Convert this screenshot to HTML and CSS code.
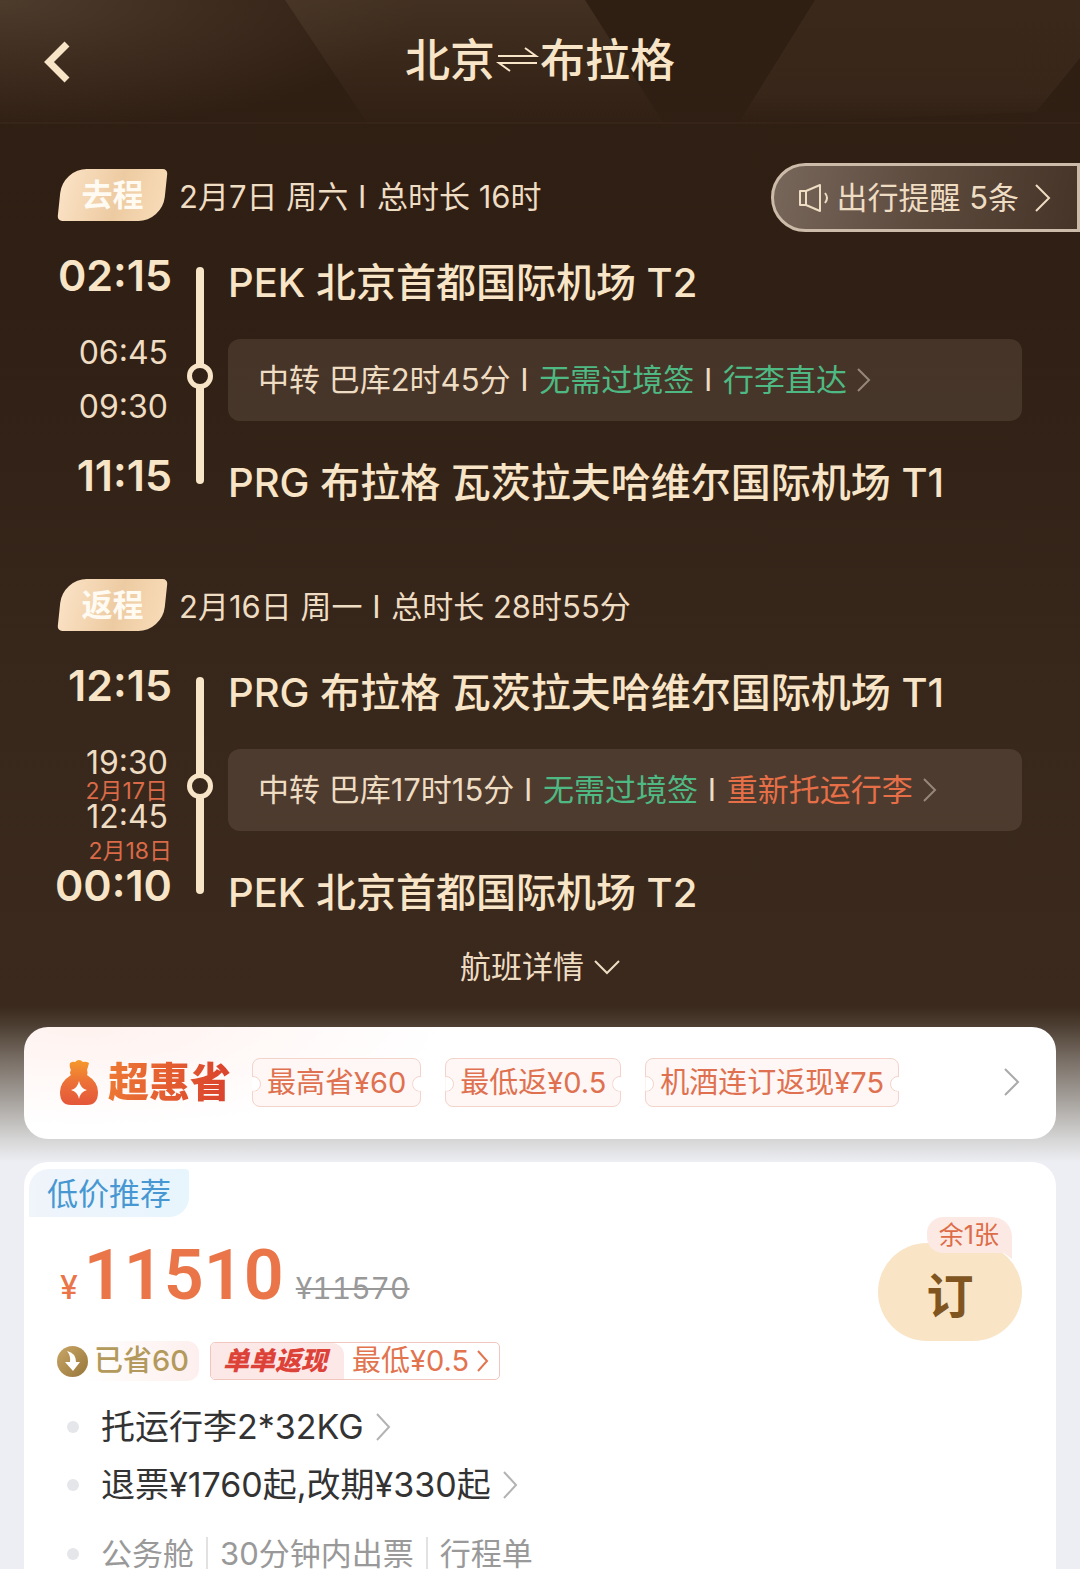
FILE: index.html
```html
<!DOCTYPE html>
<html lang="zh-CN">
<head>
<meta charset="utf-8">
<meta name="viewport" content="width=device-width, initial-scale=1">
<title>北京⇌布拉格</title>
<link rel="stylesheet" href="styles.css">
</head>
<body>
<div class="hero">
  <header class="topbar">
    <svg class="topbar-art" viewBox="0 0 1080 124" preserveAspectRatio="none" aria-hidden="true">
      <defs>
        <linearGradient id="facet" x1="0" y1="0" x2="0" y2="1">
          <stop offset="0" stop-color="#5a4634" stop-opacity=".45"/>
          <stop offset="1" stop-color="#5a4634" stop-opacity=".03"/>
        </linearGradient>
        <linearGradient id="facet2" x1="0" y1="0" x2="0" y2="1">
          <stop offset="0" stop-color="#5a4634" stop-opacity=".26"/>
          <stop offset=".75" stop-color="#5a4634" stop-opacity=".2"/>
          <stop offset="1" stop-color="#5a4634" stop-opacity="0"/>
        </linearGradient>
      </defs>
      <path d="M285 0H585L664 124H368Z" fill="url(#facet)"/>
      <path d="M815 0H1080V58L1036 112L738 124Z" fill="url(#facet2)"/>
      <path d="M0 123H1080" stroke="#4a3627" stroke-opacity=".5"/>
    </svg>
    <button class="back" type="button" aria-label="返回">
      <svg width="28" height="44" viewBox="0 0 28 44"><path d="M25 4L7 22L25 40" fill="none" stroke="currentColor" stroke-width="7"/></svg>
    </button>
    <h1 class="title">北京<svg width="45" height="34" viewBox="0 0 45 34" role="img" aria-label="往返"><path d="M3 12H41L30 4M42 19H4L15 27" fill="none" stroke="currentColor" stroke-width="2"/></svg>布拉格</h1>
  </header>

  <main class="trip">
    <section class="leg">
      <div class="leg-head">
        <span class="leg-tag">去程</span>
        <p class="leg-meta">2月7日 周六 <span class="sep">I</span> 总时长 16时</p>
        <button class="notice" type="button">
          <svg width="32" height="32" viewBox="0 0 32 32" fill="none" stroke="currentColor" stroke-width="2" stroke-linejoin="round"><path d="M2 9H8V23H2ZM8 9L22 3V29L8 23M27 11Q31 16 27 21"/></svg>
          <span>出行提醒 5条</span>
          <svg class="notice-arrow" width="16" height="28" viewBox="0 0 16 28"><path d="M1 1L14 14L1 27" fill="none" stroke="currentColor" stroke-width="2"/></svg>
        </button>
      </div>
      <div class="leg-body">
        <div class="times">
          <time class="time-main">02:15</time>
          <div class="via">
            <time>06:45</time><span class="date"></span>
            <time>09:30</time>
          </div>
          <span class="date date-last"></span>
          <time class="time-main">11:15</time>
        </div>
        <div class="track"><i class="bar"></i><i class="ring"></i><i class="bar"></i></div>
        <div class="stops">
          <h2 class="airport">PEK 北京首都国际机场 T2</h2>
          <a class="transfer" href="#transfer-out">
            <span>中转 巴库2时45分 <span class="sep">I</span> <b class="good">无需过境签</b> <span class="sep">I</span> <b class="good">行李直达</b></span>
            <svg width="14" height="24" viewBox="0 0 14 24"><path d="M1 1L12 12L1 23" fill="none" stroke="currentColor" stroke-width="2"/></svg>
          </a>
          <h2 class="airport">PRG 布拉格 瓦茨拉夫哈维尔国际机场 T1</h2>
        </div>
      </div>
    </section>

    <section class="leg">
      <div class="leg-head">
        <span class="leg-tag">返程</span>
        <p class="leg-meta">2月16日 周一 <span class="sep">I</span> 总时长 28时55分</p>
      </div>
      <div class="leg-body">
        <div class="times">
          <time class="time-main">12:15</time>
          <div class="via">
            <time>19:30</time><span class="date">2月17日</span>
            <time>12:45</time>
          </div>
          <span class="date date-last">2月18日</span>
          <time class="time-main">00:10</time>
        </div>
        <div class="track"><i class="bar"></i><i class="ring"></i><i class="bar"></i></div>
        <div class="stops">
          <h2 class="airport">PRG 布拉格 瓦茨拉夫哈维尔国际机场 T1</h2>
          <a class="transfer" href="#transfer-back">
            <span>中转 巴库17时15分 <span class="sep">I</span> <b class="good">无需过境签</b> <span class="sep">I</span> <b class="warn">重新托运行李</b></span>
            <svg width="14" height="24" viewBox="0 0 14 24"><path d="M1 1L12 12L1 23" fill="none" stroke="currentColor" stroke-width="2"/></svg>
          </a>
          <h2 class="airport">PEK 北京首都国际机场 T2</h2>
        </div>
      </div>
    </section>

    <button class="details" type="button">航班详情
      <svg width="26" height="16" viewBox="0 0 26 16"><path d="M1 2L13 14L25 2" fill="none" stroke="currentColor" stroke-width="2"/></svg>
    </button>
  </main>

  <a class="promo" href="#promo">
    <svg class="bag" width="38" height="45" viewBox="0 0 38 45" aria-hidden="true">
      <defs><linearGradient id="bag" x1="0" y1="0" x2="0" y2="1"><stop offset="0" stop-color="#f59a2c"/><stop offset=".5" stop-color="#ec7038"/><stop offset="1" stop-color="#e4573a"/></linearGradient></defs>
      <path d="M10 3Q13 1 15 2Q19-2 23 2Q26 1 29 3Q28 7 27 10Q28 13 27 15Q38 22 38 32Q38 45 27 45H11Q0 45 0 32Q0 22 11 15Q9 13 11 10Q9 7 10 3Z" fill="url(#bag)"/>
      <path d="M19 21Q20.500 28.500 27 30Q20.500 31.500 19 39Q17.500 31.500 11 30Q17.500 28.500 19 21Z" fill="#fff"/>
    </svg>
    <strong class="promo-name">超惠省</strong>
    <span class="ticket">最高省¥60</span>
    <span class="ticket">最低返¥0.5</span>
    <span class="ticket">机酒连订返现¥75</span>
    <svg class="promo-arrow" width="16" height="28" viewBox="0 0 16 28"><path d="M1 1L14 14L1 27" fill="none" stroke="currentColor" stroke-width="2"/></svg>
  </a>
</div>

<section class="offer">
  <span class="offer-badge">低价推荐</span>
  <div class="offer-body">
    <div class="offer-info">
      <p class="price"><span class="yen">¥</span><strong>11510</strong><s>¥11570</s></p>
      <div class="tags">
        <span class="saved">
          <svg width="31" height="31" viewBox="0 0 31 31" aria-hidden="true">
            <defs><linearGradient id="coin" x1="0" y1="0" x2="1" y2="1"><stop offset="0" stop-color="#c9a667"/><stop offset="1" stop-color="#97763a"/></linearGradient></defs>
            <circle cx="15.500" cy="15.500" r="15.500" fill="url(#coin)"/>
            <path d="M10 5Q19 7 19 16H23L16 25L8 16H13Q14 10 10 5Z" fill="#fff"/>
          </svg>已省60</span>
        <a class="cashback" href="#cashback">
          <em>单单返现</em>
          <span>最低¥0.5</span>
          <svg width="12" height="22" viewBox="0 0 12 22"><path d="M1 1L10 11L1 21" fill="none" stroke="currentColor" stroke-width="2"/></svg>
        </a>
      </div>
      <ul class="facts">
        <li><a href="#baggage">托运行李2*32KG<svg width="15" height="28" viewBox="0 0 15 28"><path d="M1 1L13 14L1 27" fill="none" stroke="currentColor" stroke-width="2"/></svg></a></li>
        <li><a href="#refund">退票¥1760起,改期¥330起<svg width="15" height="28" viewBox="0 0 15 28"><path d="M1 1L13 14L1 27" fill="none" stroke="currentColor" stroke-width="2"/></svg></a></li>
        <li class="minor"><span>公务舱</span><span>30分钟内出票</span><span>行程单</span></li>
      </ul>
    </div>
    <div class="book-wrap">
      <span class="left-count">余1张</span>
      <button class="book" type="button">订</button>
    </div>
  </div>
</section>
</body>
</html>
```

FILE: styles.css
```css
* {
  box-sizing: border-box;
}

body {
  margin: 0;
  background: #edeef3;
  font-family: Inter, "Noto Sans CJK SC", sans-serif;
  color: #333;
}

h1,
h2,
p,
ul {
  margin: 0;
  padding: 0;
}

button {
  margin: 0;
  padding: 0;
  border: 0;
  background: none;
  color: inherit;
  font: inherit;
  cursor: pointer;
}

a {
  color: inherit;
  text-decoration: none;
}

svg {
  flex: none;
}

/* Itinerary */
.hero {
  padding-bottom: 23px;
  background: linear-gradient(
    #2f1e12 0,
    #301f14 300px,
    #38271b 700px,
    #3a291c calc(100% - 156px),
    #4e4034 calc(100% - 135px),
    #776c63 calc(100% - 104px),
    #a6a19c calc(100% - 62px),
    #d5d5d5 calc(100% - 23px),
    #edeef3 100%
  );
  color: #eedcc3;
}

.topbar {
  position: relative;
  display: grid;
  grid-template-columns: 1fr auto 1fr;
  align-items: center;
  height: 124px;
  padding: 0 42px;
  background: radial-gradient(ellipse 420px 130px at 0 0, #4d3b2c, transparent);
  color: #f8e5c8;
}

.topbar-art {
  position: absolute;
  inset: 0;
  width: 100%;
  height: 100%;
}

.back {
  position: relative;
  justify-self: start;
  height: 44px;
}

.back svg {
  display: block;
}

.title {
  position: relative;
  display: flex;
  align-items: center;
  padding-bottom: 2px;
  font-size: 45px;
  font-weight: 500;
  line-height: 60px;
}

.trip {
  display: flex;
  flex-direction: column;
  padding: 45px 0 38px;
}

.leg + .leg {
  margin-top: 68px;
}

.leg-head {
  display: flex;
  align-items: center;
  gap: 14px;
  height: 52px;
  padding-left: 60px;
}

.leg-tag {
  position: relative;
  z-index: 0;
  width: 105px;
  font-size: 31px;
  font-weight: 700;
  line-height: 54px;
  text-align: center;
  color: #fffaf2;
}

.leg-tag::before {
  content: "";
  position: absolute;
  inset: 1px 0;
  z-index: -1;
  border-radius: 24px 5px 24px 5px;
  background: linear-gradient(100deg, #fbe3c6, #edcba2 55%, #f8dcb8);
  transform: skewX(-6deg);
}

.leg-meta {
  padding-top: 3px;
  font-size: 31px;
  line-height: 52px;
}

.sep {
  margin: 0 2px 0 1px;
}

.notice {
  display: flex;
  align-items: center;
  gap: 6px;
  height: 69px;
  margin: 4px 0 0 auto;
  padding: 2px 26px 0 24px;
  border: 3px solid #cdbba9;
  border-radius: 35px 0 0 35px;
  background: linear-gradient(100deg, #77665a, #5c4a3d 50%, #473428);
  font-size: 31px;
  line-height: 44px;
}

.notice-arrow {
  margin-left: 10px;
}

.leg-body {
  display: grid;
  grid-template-columns: 116px 56px 1fr;
  padding: 32px 58px 0 56px;
}

.times {
  display: flex;
  flex-direction: column;
  align-items: flex-end;
}

.time-main {
  font-size: 43px;
  font-weight: 600;
  line-height: 44px;
  color: #f8e5c8;
}

.via {
  display: flex;
  flex-direction: column;
  align-items: flex-end;
  margin: 42px 0 6px;
  padding-right: 4px;
  font-size: 32px;
  line-height: 28px;
}

.date {
  height: 26px;
  font-size: 23px;
  line-height: 28px;
  white-space: nowrap;
  color: #da6a48;
}

.track {
  display: flex;
  flex-direction: column;
  align-items: center;
  height: 217px;
  margin-top: 14px;
}

.bar {
  flex: 1;
  width: 8px;
  border-radius: 4px 4px 0 0;
  background: #f8e5c8;
}

.ring + .bar {
  border-radius: 0 0 4px 4px;
}

.ring {
  width: 26px;
  height: 26px;
  margin: -1px 0;
  border: 5px solid #f8e5c8;
  border-radius: 50%;
}

.stops {
  padding-top: 2px;
}

.airport {
  font-size: 40px;
  font-weight: 500;
  line-height: 56px;
  white-space: nowrap;
  color: #f8e5c8;
}

.transfer {
  display: flex;
  align-items: center;
  gap: 10px;
  min-height: 82px;
  margin: 28px 0 34px;
  padding: 0 30px;
  border-radius: 12px;
  background: rgba(255, 235, 220, 0.1);
  font-size: 31px;
  line-height: 44px;
  white-space: nowrap;
}

.transfer b {
  font-weight: 400;
}

.transfer svg {
  color: #96877a;
}

.good {
  color: #4fb983;
}

.warn {
  color: #e66f48;
}

.details {
  display: flex;
  align-items: center;
  align-self: center;
  gap: 10px;
  margin-top: 24px;
  font-size: 31px;
  line-height: 44px;
}

/* Promotion strip */
.promo {
  display: flex;
  align-items: center;
  height: 112px;
  margin: 0 24px;
  padding: 0 36px 2px;
  border-radius: 24px;
  background: radial-gradient(ellipse 360px 100px at 60px 0, #fff2ef, #fff);
}

.promo-name {
  margin: 0 21px 0 10px;
  background: linear-gradient(100deg, #ee7a35, #d93f2c);
  background-clip: text;
  -webkit-background-clip: text;
  font-size: 41px;
  font-weight: 900;
  line-height: 56px;
  color: transparent;
}

.ticket {
  position: relative;
  padding: 0 14px;
  border: 1px solid #f3d3ca;
  border-radius: 8px;
  background: #fef7f5;
  font-size: 29px;
  line-height: 47px;
  white-space: nowrap;
  color: #df7150;
}

.ticket + .ticket {
  margin-left: 24px;
}

.ticket::before,
.ticket::after {
  content: "";
  position: absolute;
  top: 17px;
  width: 14px;
  height: 14px;
  border: 1px solid #f3d3ca;
  border-radius: 50%;
  background: #fff;
}

.ticket::before {
  left: -8px;
  clip-path: inset(0 0 0 7px);
}

.ticket::after {
  right: -8px;
  clip-path: inset(0 7px 0 0);
}

.promo-arrow {
  margin-left: auto;
  color: #aaa;
}

/* Offer */
.offer {
  margin: 0 24px;
  padding: 7px 34px 0 5px;
  border-radius: 24px 24px 0 0;
  background: #fff;
}

.offer-badge {
  display: block;
  width: max-content;
  padding: 1px 18px 0;
  border-radius: 20px 4px 20px 0;
  background: linear-gradient(90deg, #f0f4fb, #e7f5fd);
  font-size: 31px;
  line-height: 47px;
  color: #4798d2;
}

.offer-body {
  display: flex;
  justify-content: space-between;
  align-items: flex-start;
  padding-left: 28px;
}

.offer-info {
  padding-top: 22px;
}

.price {
  display: flex;
  align-items: baseline;
  height: 80px;
  padding-left: 3px;
  line-height: 72px;
  color: #e97549;
}

.yen {
  margin-right: 6px;
  font-size: 32px;
  font-weight: 500;
}

.price strong {
  font-family: Roboto, Inter, sans-serif;
  font-size: 70px;
  font-weight: 600;
}

.price s {
  margin-left: 12px;
  font-size: 30px;
  font-variant-numeric: tabular-nums;
  text-decoration-thickness: 2px;
  color: #999;
}

.tags {
  display: flex;
  align-items: center;
  gap: 11px;
  margin-top: 22px;
  font-size: 29px;
}

.saved {
  display: flex;
  align-items: center;
  gap: 6px;
  padding-right: 10px;
  border-radius: 12px;
  background: linear-gradient(90deg, #fff 20%, #fdefed);
  font-weight: 500;
  line-height: 40px;
  color: #b39a5c;
}

.cashback {
  display: flex;
  align-items: center;
  gap: 8px;
  padding-right: 10px;
  border: 1px solid #f1c6be;
  border-radius: 5px;
  line-height: 36px;
  color: #e2744f;
}

.cashback em {
  padding: 0 17px 0 12px;
  border-radius: 4px 12px 0 4px;
  background: #fde8e8;
  font-size: 26px;
  font-weight: 900;
  color: #dd4238;
}

.facts {
  display: flex;
  flex-direction: column;
  gap: 14px;
  margin-top: 24px;
  list-style: none;
  font-size: 34px;
  font-variant-ligatures: no-contextual;
  line-height: 44px;
}

.facts li {
  display: flex;
  align-items: center;
}

.facts li::before {
  content: "";
  width: 12px;
  height: 12px;
  margin: 0 22px 0 10px;
  border-radius: 50%;
  background: #e5e6ea;
}

.facts a {
  display: flex;
  align-items: center;
  gap: 12px;
}

.facts svg {
  color: #b3b3b3;
}

.facts .minor {
  margin-top: 16px;
  font-size: 31px;
  line-height: 34px;
  color: #999;
}

.minor span + span {
  margin-left: 12px;
  padding-left: 12px;
  border-left: 2px solid #e2e2e2;
}

.book-wrap {
  position: relative;
  z-index: 0;
  padding-top: 26px;
}

.book {
  width: 144px;
  height: 98px;
  border-radius: 49px;
  background: #f9e5c6;
  font-size: 47px;
  font-weight: 700;
  color: #80551f;
}

.left-count {
  position: absolute;
  top: 0;
  right: 10px;
  padding: 0 13px 0 12px;
  border-radius: 16px 20px 0 16px;
  background: #fce9e3;
  font-size: 25px;
  line-height: 36px;
  white-space: nowrap;
  color: #dd6c48;
}

.left-count::after {
  content: "";
  position: absolute;
  top: 20px;
  right: 0;
  width: 12px;
  height: 22px;
  background: inherit;
  clip-path: polygon(0 0, 100% 0, 100% 100%, 0 60%);
}
```
